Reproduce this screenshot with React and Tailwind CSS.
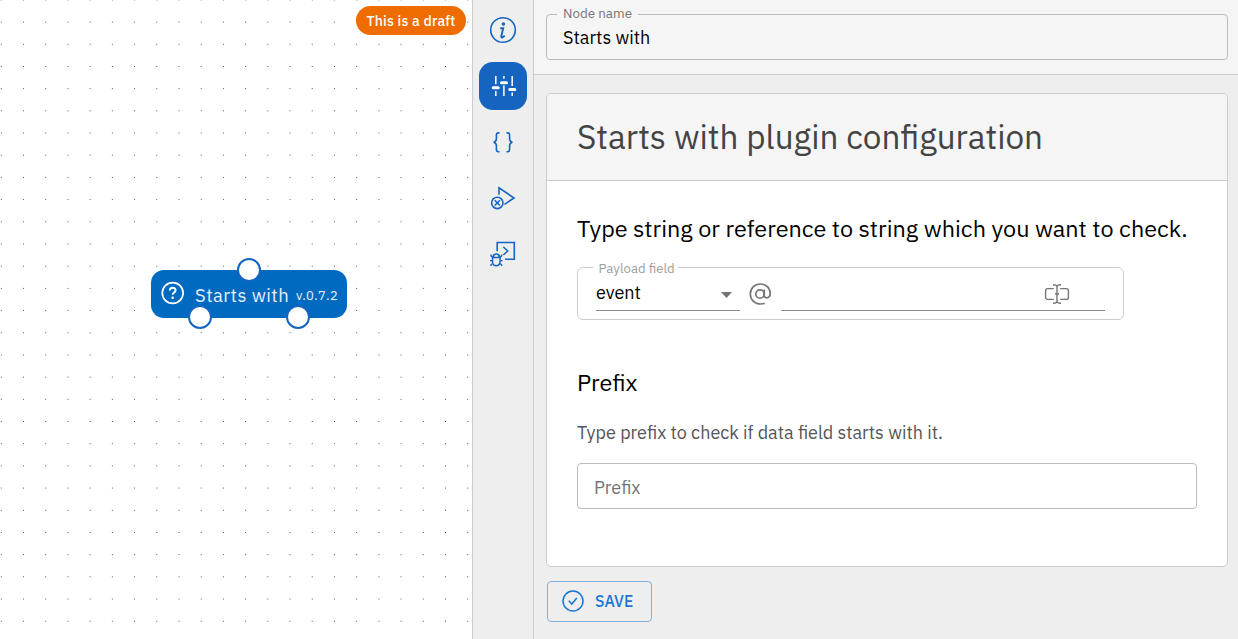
import React from 'react';

function InfoIcon() {
  return (
    <svg width="28" height="28" viewBox="0 0 28 28" fill="none">
      <circle cx="14" cy="14" r="12.3" stroke="#1565c0" strokeWidth="1.6" />
      <circle cx="14.400" cy="8" r="1.800" fill="#1565c0" />
      <path d="M11.200 12.200h3l-1.900 8c-.3 1.700 1.300 1.800 3.400-.6" stroke="#1565c0" strokeWidth="1.900" />
    </svg>
  );
}

function SlidersIcon() {
  return (
    <svg width="28" height="28" viewBox="0 0 28 28" fill="none" stroke="#fff">
      <path d="M6.800 4v8.300M6.800 19V24M14.900 4v2.800M14.900 13.500V24M23.200 4v10M23.200 20.500V24" strokeWidth="1.500" />
      <path d="M4.200 15.800h5M12.500 10.700h5M20.800 17.500h5" strokeWidth="3" strokeLinecap="round" />
    </svg>
  );
}

function BracesIcon() {
  return (
    <svg width="28" height="28" viewBox="0 0 28 28" fill="none" stroke="#1565c0" strokeWidth="1.600">
      <path d="M10.500 4.900H9.400C8 4.900 7.400 5.700 7.400 7v3.800c0 1.900-.9 3.100-2.800 3.500 1.900.4 2.800 1.600 2.800 3.500v3.800c0 1.300.6 2.100 2 2.100h1.100M17.500 4.900h1.100c1.400 0 2 .8 2 2.100v3.800c0 1.900.9 3.100 2.800 3.500-1.900.4-2.800 1.600-2.800 3.500v3.800c0 1.300-.6 2.100-2 2.100h-1.100" />
    </svg>
  );
}

function RunErrorIcon() {
  return (
    <svg width="28" height="28" viewBox="0 0 28 28" fill="none" stroke="#1565c0" strokeWidth="1.600">
      <path d="M10 10.800V3.800L25 14 15.500 20.300" />
      <circle cx="8.300" cy="18.900" r="5.700" />
      <path d="M5.700 16.300l5.200 5.200M10.900 16.300L5.700 21.500" />
    </svg>
  );
}

function DebugIcon() {
  return (
    <svg width="28" height="28" viewBox="0 0 28 28" fill="none" stroke="#1565c0" strokeWidth="1.600">
      <path d="M8.200 11.300V2.500H25.300V19.200H16" />
      <path d="M14.400 7l4.300 4-4.300 4" strokeWidth="1.500" />
      <path d="M3.500 17.500h7.600v4.300a3.800 4 0 0 1-7.600 0zM4.200 17.200c0-4.400 6.200-4.400 6.200 0" strokeWidth="1.500" />
      <path d="M2 14.400v1.400l1.800 1.400M12.600 14.400v1.400l-1.800 1.400M1 20.600h2.500M11.100 20.600h2.500M2 26v-1.200l1.800-1.300M12.600 26v-1.200l-1.800-1.300" strokeWidth="1.400" />
    </svg>
  );
}

function HelpIcon() {
  return (
    <svg width="24" height="24" viewBox="0 0 24 24" fill="none" stroke="#fff">
      <circle cx="11.700" cy="12" r="10.400" strokeWidth="1.700" />
      <path d="M8.800 9.600c0-3.700 5.800-3.700 5.800-.3 0 2.100-2.900 2.200-2.900 4.500" strokeWidth="2" />
      <circle cx="11.700" cy="16.800" r="1.300" fill="#fff" stroke="none" />
    </svg>
  );
}

function AtIcon() {
  return (
    <svg width="24" height="24" viewBox="0 0 24 24" fill="none" stroke="#757575" strokeWidth="1.700">
      <circle cx="12" cy="12" r="4.200" />
      <path d="M16.200 7.600v5.500c0 4 6 3.500 6-1.400C22.200 6 18 2 12.500 2 6.500 2 2.300 6.300 2.300 12s4.200 10 10.200 10c1.600 0 3-.3 4.200-.8" />
    </svg>
  );
}

function TextCursorIcon() {
  return (
    <svg width="26" height="24" viewBox="0 0 26 24" fill="none" stroke="#757575" strokeWidth="1.400">
      <path d="M9.800 6.600H3.600a2 2 0 0 0-2 2v6.800a2 2 0 0 0 2 2h6.200M16.200 6.600h6.200a2 2 0 0 1 2 2v6.800a2 2 0 0 1-2 2h-6.200" />
      <path d="M9 2.700c2.400 0 4 .6 4 2v14.600c0 1.400-1.600 2-4 2M17 2.700c-2.400 0-4 .6-4 2M13 19.300c0 1.400 1.600 2 4 2M11 12h4" />
    </svg>
  );
}

function CheckCircleIcon() {
  return (
    <svg width="22" height="22" viewBox="0 0 22 22" fill="none" stroke="#1976d2" strokeWidth="1.500">
      <circle cx="11" cy="11" r="10" />
      <path d="M6.800 10.800l3 3.200 5-6" />
    </svg>
  );
}

function Canvas() {
  return (
    <main className="relative h-full w-[472px] shrink-0 overflow-hidden bg-white">
      <svg className="block" width="472" height="639">
        <defs>
          <pattern id="dots" x="-9.800" y="-11.200" width="22.210" height="22.190" patternUnits="userSpaceOnUse">
            <circle cx="11.100" cy="11.100" r="0.560" fill="#333" />
          </pattern>
        </defs>
        <rect width="472" height="639" fill="url(#dots)" />
      </svg>
      <span className="absolute left-[356px] top-[6px] flex h-[29px] w-[110px] items-center justify-center rounded-full bg-[#ef6c00] pt-[2px] text-[14px] font-medium tracking-[0.200px] text-white">
        This is a draft
      </span>
      <div className="absolute left-[151px] top-[270px] flex h-12 w-[196px] items-center rounded-[13px] bg-[#0069c0] pl-[10px] text-white">
        <span className="-mt-[2px]"><HelpIcon /></span>
        <span className="ml-[10px] mt-px whitespace-nowrap text-[18.500px] leading-6 tracking-[0.400px] text-white/90">Starts with</span>
        <span className="ml-[7px] mt-[4px] whitespace-nowrap text-[13px] leading-6 tracking-[0.300px] text-white/90">v.0.7.2</span>
      </div>
      <i className="absolute left-[237px] top-[258px] size-6 rounded-full border-2 border-[#1565c0] bg-white" />
      <i className="absolute left-[188px] top-[305.400px] size-6 rounded-full border-2 border-[#1565c0] bg-white" />
      <i className="absolute left-[286px] top-[305.400px] size-6 rounded-full border-2 border-[#1565c0] bg-white" />
    </main>
  );
}

function Toolbar() {
  return (
    <nav className="flex h-full w-[62px] shrink-0 flex-col items-center gap-2 border-x border-[#ccc] bg-[#eee] pt-[6px]">
      <button className="flex size-12 items-center justify-center"><InfoIcon /></button>
      <button className="flex size-12 items-center justify-center rounded-[14px] bg-[#1565c0]"><SlidersIcon /></button>
      <button className="flex size-12 items-center justify-center"><BracesIcon /></button>
      <button className="flex size-12 items-center justify-center"><RunErrorIcon /></button>
      <button className="flex size-12 items-center justify-center"><DebugIcon /></button>
    </nav>
  );
}

export default function App() {
  return (
    <div className="flex h-[639px] w-[1238px] overflow-hidden bg-[#eee] font-['IBM_Plex_Sans',Roboto,sans-serif] text-black">
      <Canvas />
      <Toolbar />
      <section className="flex min-w-0 flex-1 flex-col">
        <header className="h-[75px] border-b border-[#ccc] bg-[#f5f5f5] pl-3 pr-[10px] pt-1">
          <fieldset className="h-[56px] rounded-[4px] border border-[#bbb] pl-[10px]">
            <legend className="px-[6px] pb-[2px] text-[13.400px] leading-[18px] text-[#757575]">Node name</legend>
            <p className="pl-[6px] pt-px text-[18px] leading-[26px]">Starts with</p>
          </fieldset>
        </header>
        <div className="flex flex-col items-start gap-[14px] pl-3 pr-[10px] pt-[18px]">
          <article className="h-[474px] w-full overflow-hidden rounded-[5px] border border-[#ccc] bg-white">
            <h1 className="flex h-[87px] items-center border-b border-[#ccc] bg-[#f5f5f5] pl-[30px] text-[33.300px] text-[#444]">
              Starts with plugin configuration
            </h1>
            <div className="flex flex-col px-[30px] pt-[31px]">
              <h2 className="whitespace-nowrap text-[23.430px] leading-8">Type string or reference to string which you want to check.</h2>
              <fieldset className="mt-[13px] flex h-[63px] w-[547px] rounded-[6px] border border-[#ccc] pl-[15px]">
                <legend className="pl-[5.500px] pr-[3px] pt-[2px] text-[13.200px] leading-[18px] text-[#9e9e9e]">Payload field</legend>
                <div className="flex items-start pt-px">
                  <div className="ml-[3px] flex h-[33px] w-[144px] items-center justify-between border-b border-[#8c8c8c] pb-[2px]">
                    <span className="text-[18px] leading-6">event</span>
                    <svg className="mr-2 mt-[4px]" width="11" height="6" viewBox="0 0 11 6"><path d="M0 0h11L5.500 6z" fill="#757575" /></svg>
                  </div>
                  <span className="ml-[8px] mt-[4px]"><AtIcon /></span>
                  <div className="ml-[9px] flex h-[33px] w-[324px] justify-end border-b border-[#8c8c8c] pr-[35px] pt-[4px]">
                    <TextCursorIcon />
                  </div>
                </div>
              </fieldset>
              <h2 className="mt-[46px] text-[23.430px] leading-8">Prefix</h2>
              <p className="mt-[22px] text-[18px] leading-[26px] text-[#555]">Type prefix to check if data field starts with it.</p>
              <div className="mt-[17px] flex h-[46px] items-center rounded-[4px] border border-[#bbb] pl-4 pt-[2px] text-[18px] text-[#757575]">Prefix</div>
            </div>
          </article>
          <button className="ml-px flex h-[41px] w-[105px] items-center gap-[11px] rounded-[4px] border border-[#1976d2]/50 pb-px pl-[14px] text-[15.750px] font-medium text-[#1976d2]">
            <CheckCircleIcon />
            <span className="pt-[2px]">SAVE</span>
          </button>
        </div>
      </section>
    </div>
  );
}
